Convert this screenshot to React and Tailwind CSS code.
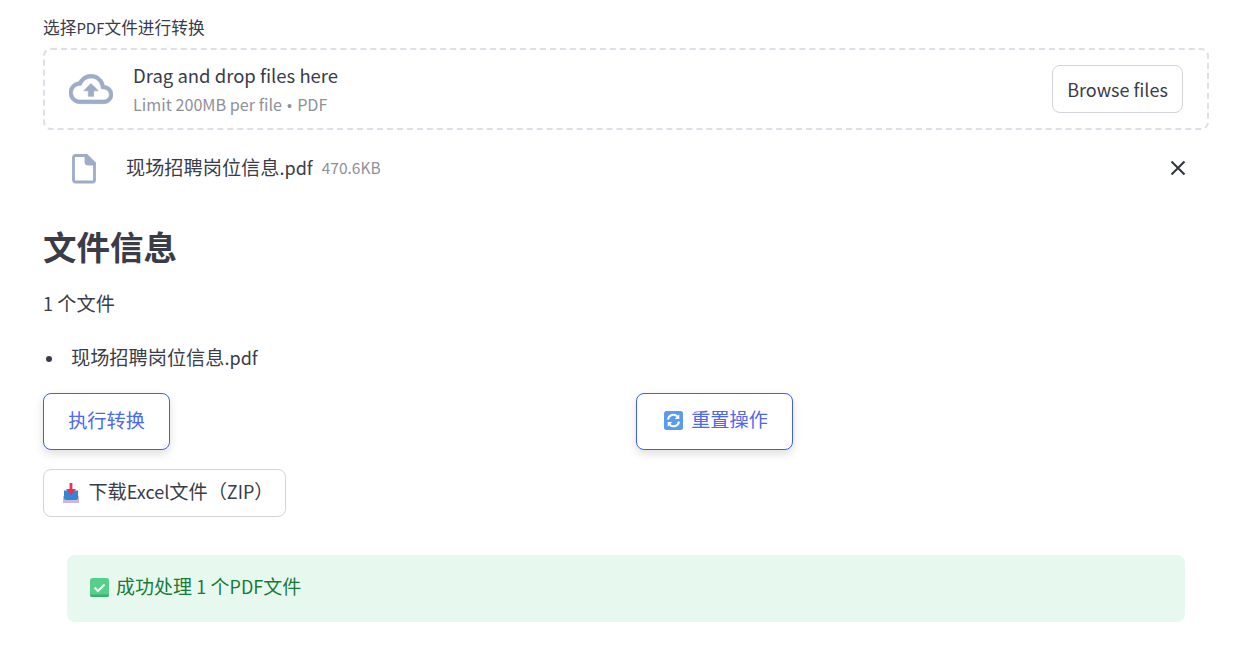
const CJK = { fontFamily: '"Noto Sans CJK SC", sans-serif' };

function CloudIcon() {
  return (
    <svg width="44" height="44" viewBox="0 0 24 24" fill="#9eacc7" stroke="#9eacc7" strokeWidth="0.35">
      <path d="M19.35 10.04C18.67 6.59 15.64 4 12 4 9.11 4 6.6 5.64 5.35 8.04 2.34 8.36 0 10.91 0 14c0 3.31 2.69 6 6 6h13c2.76 0 5-2.24 5-5 0-2.64-2.05-4.78-4.65-4.96zM19 18H6c-2.21 0-4-1.79-4-4 0-2.05 1.53-3.76 3.56-3.97l1.07-.11.5-.95C8.08 7.14 9.94 6 12 6c2.62 0 4.88 1.86 5.39 4.43l.3 1.5 1.53.11c1.56.1 2.78 1.41 2.78 2.96 0 1.65-1.35 3-3 3zM8 13h2.55v3h2.9v-3H16l-4-4z" />
    </svg>
  );
}

function FileIcon() {
  return (
    <svg width="32" height="32" viewBox="0 0 32 32">
      <path d="M6.5 5.5c0-1.1.9-2 2-2H19v6.5c0 1.1.9 2 2 2h6.5v16c0 1.1-.9 2-2 2h-17c-1.1 0-2-.9-2-2z" fill="none" stroke="#9eacc7" strokeWidth="2.8" />
      <path d="M19 2.2h1.5l8.3 8.3v2H21c-1.1 0-2-.9-2-2z" fill="#9eacc7" />
    </svg>
  );
}

function CloseIcon() {
  return (
    <svg width="20" height="20" viewBox="0 0 20 20" fill="none" stroke="#31333f" strokeWidth="2">
      <path d="M3.5 3.5l13 13M16.5 3.5l-13 13" />
    </svg>
  );
}

function RefreshEmoji() {
  return (
    <svg width="19" height="19" viewBox="0 0 19 19" className="mb-[2px] shrink-0">
      <rect x="0" y="0" width="19" height="19" rx="2.5" fill="#5a9bf0" />
      <path d="M4 8.5A5.5 5.5 0 0 1 13.6 5.6" fill="none" stroke="#fff" strokeWidth="2" />
      <path d="M15.3 3.3v4.6h-4.6z" fill="#fff" />
      <path d="M15 10.5A5.5 5.5 0 0 1 5.4 13.4" fill="none" stroke="#fff" strokeWidth="2" />
      <path d="M3.7 15.7v-4.6h4.6z" fill="#fff" />
    </svg>
  );
}

function InboxEmoji() {
  return (
    <svg width="16" height="20" viewBox="0 0 16 20" className="shrink-0">
      <path d="M0 13h16v7H0z" fill="#cdb8d6" />
      <path d="M1 7.5h14V15q0 2-2 2H3q-2 0-2-2z" fill="#2f87d6" />
      <path d="M6.6 0h2.8v6H13l-5 6-5-6h3.6z" fill="#e8305c" />
    </svg>
  );
}

function CheckEmoji() {
  return (
    <svg width="19" height="19" viewBox="0 0 19 19" className="mb-[2px] shrink-0">
      <rect width="19" height="19" rx="2.5" fill="#56cf8a" />
      <path d="M0 16.5V17q0 2 2 2h15q2 0 2-2v-.5z" fill="#3fae72" />
      <path d="M4.5 9.5l3.5 3.5 6.5-6.5" fill="none" stroke="#f2fff7" strokeWidth="2" />
    </svg>
  );
}

// latin runs are a bit smaller than the CJK around them in the reference
function Lat({ children }) {
  return <span className="text-[18px]">{children}</span>;
}

const FILE_NAME = (
  <>
    现场招聘岗位信息<Lat>.pdf</Lat>
  </>
);

export default function App() {
  return (
    <div className="w-[1234px] h-[652px] overflow-hidden bg-white pl-[43px] pr-[25px] text-[#3a3c48]" style={CJK}>
      <p className="pt-[16px] h-[48px] text-[16.7px] leading-[22px]">
        选择<span className="text-[15px]">PDF</span>文件进行转换
      </p>

      <div className="flex h-[82px] items-center justify-between rounded-lg border-2 border-dashed border-[#dde0e6] pl-[24px] pr-[24px]">
        <div className="flex items-center gap-[20px]">
          <CloudIcon />
          <div className="pt-[2px]">
            <p className="text-[18.5px] leading-[26px]">Drag and drop files here</p>
            <p className="mt-[4px] text-[16.2px] leading-[24px] text-[#8f9199]">
              Limit 200MB per file <span className="mx-[1.5px] font-['Liberation_Sans',sans-serif] text-[14px]">•</span> PDF
            </p>
          </div>
        </div>
        <button className="h-[48px] w-[131px] rounded-lg border border-[#d3d5da] bg-white text-[18px]">Browse files</button>
      </div>

      <div className="flex h-[76px] items-center pl-[24px] pr-[21px]">
        <FileIcon />
        <span className="ml-[27px] pb-[2px] text-[19.2px]">{FILE_NAME}</span>
        <span className="ml-[9px] text-[15.5px] text-[#8f9199]">470.6KB</span>
        <span className="ml-auto">
          <CloseIcon />
        </span>
      </div>

      <h1 className="mt-[16px] h-[48px] text-[33.5px] font-bold leading-[48px]">文件信息</h1>

      <p className="mt-[20px] h-[27px] text-[19.2px] leading-[27px]">
        <Lat>1</Lat> 个文件
      </p>

      <div className="mt-[27px] flex h-[27px] items-center text-[19.2px] leading-[27px]">
        <span className="ml-[3px] mr-[19px] mt-[2px] h-[6px] w-[6px] rounded-full bg-[#3a3c48]" />
        <span>{FILE_NAME}</span>
      </div>

      <div className="mt-[22px] grid grid-cols-[593px_1fr]">
        <div>
          <button className="h-[57px] w-[127px] rounded-lg border border-[#3f5ef0] bg-white pb-[3px] text-[19.2px] text-[#4c67f2] shadow-[0_4px_10px_rgba(0,0,0,0.13)]">
            执行转换
          </button>
        </div>
        <div>
          <button className="flex h-[57px] w-[157px] items-center justify-center gap-[8px] rounded-lg border border-[#3f5ef0] bg-white pl-[3px] text-[19.2px] text-[#4c67f2] shadow-[0_4px_10px_rgba(0,0,0,0.13)]">
            <RefreshEmoji />
            <span className="pb-[5px]">重置操作</span>
          </button>
        </div>
      </div>

      <button className="mt-[19px] flex h-[48px] w-[243px] items-center justify-center gap-[9px] rounded-lg border border-[#d3d5da] bg-white pl-[8px] text-[19.2px]">
        <InboxEmoji />
        <span className="pb-[3px]">
          下载<Lat>Excel</Lat>文件（<Lat>ZIP</Lat>）
        </span>
      </button>

      <div className="ml-[24px] mt-[38px] flex h-[67px] w-[1118px] items-center gap-[7px] rounded-lg bg-[#e7f9ee] pl-[23px] text-[19px] text-[#177a3a]">
        <CheckEmoji />
        <span className="pb-[5px]">
          成功处理 <Lat>1</Lat> 个<Lat>PDF</Lat>文件
        </span>
      </div>
    </div>
  );
}
